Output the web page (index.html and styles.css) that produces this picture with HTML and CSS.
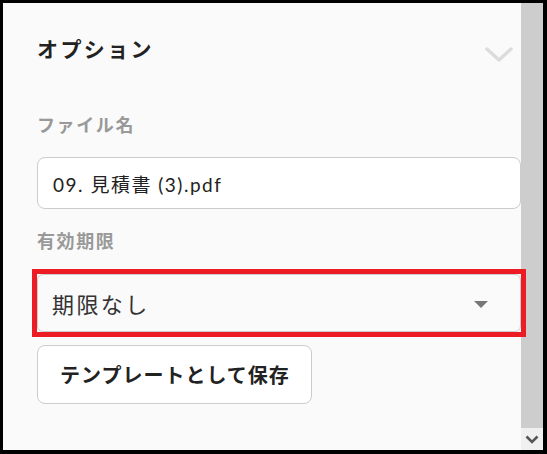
FILE: index.html
```html
<!DOCTYPE html>
<html>
<head>
    <title>オプション</title>
    <link rel="stylesheet" href="styles.css">
</head>
<body>
<div class="frame">
    <div class="panel">
        <div class="header">
            <h2>オプション</h2>
            <svg class="collapse" width="28" height="16" viewBox="0 0 28 16">
                <path d="M2 2 L14 13 L26 2" fill="none" stroke="#dcdcdc" stroke-width="3.5" stroke-linecap="round" stroke-linejoin="round"/>
            </svg>
        </div>

        <label class="field-label">ファイル名</label>
        <div class="text-input">09. 見積書 (3).pdf</div>

        <label class="field-label">有効期限</label>
        <div class="highlight">
            <div class="select">
                <span>期限なし</span>
                <span class="caret"></span>
            </div>
        </div>

        <button class="save-btn">テンプレートとして保存</button>
    </div>
    <div class="scrollbar">
        <div class="thumb"></div>
        <div class="arrow">
            <svg width="14" height="9" viewBox="0 0 14 9">
                <path d="M1.5 1.5 L7 7 L12.5 1.5" fill="none" stroke="#555" stroke-width="2.5"/>
            </svg>
        </div>
    </div>
</div>
</body>
</html>
```

FILE: styles.css
```css
* { box-sizing: border-box; }
html, body {
    margin: 0;
    padding: 0;
    background: #000;
}
body {
    font-family: Lato, "Noto Sans CJK JP", sans-serif;
    color: #222;
}
.frame {
    width: 547px;
    height: 454px;
    border: 3px solid #000;
    border-right-width: 4px;
    border-bottom-width: 4px;
    display: flex;
    background: #fafafa;
}
.panel {
    flex: 1;
    display: flex;
    flex-direction: column;
    align-items: flex-start;
    padding: 33px 0 0 34px;
}
.header {
    width: 100%;
    display: flex;
    justify-content: space-between;
    align-items: flex-start;
}
.header h2 {
    margin: 0;
    font-size: 21px;
    line-height: 26px;
    letter-spacing: 2.4px;
    font-weight: bold;
    color: #222;
}
.collapse {
    margin: 11px 8px 0 0;
}
.field-label {
    display: block;
    font-size: 18px;
    line-height: 22px;
    letter-spacing: 1.6px;
    font-weight: bold;
    color: #999;
    margin-top: 51px;
}
.text-input {
    width: 100%;
    height: 52px;
    margin-top: 21px;
    padding-left: 15px;
    display: flex;
    align-items: center;
    background: #fff;
    border: 1px solid #ccc;
    border-radius: 8px;
    font-size: 19px;
    letter-spacing: 1.5px;
    color: #222;
}
.text-input + .field-label {
    margin-top: 21px;
}
.highlight {
    width: calc(100% + 10px);
    margin: 17px -5px 0;
    border: 5px solid #ed1c24;
    position: relative;
    z-index: 1;
}
.select {
    height: 58px;
    padding: 0 32px 0 14px;
    display: flex;
    align-items: center;
    justify-content: space-between;
    background: #fafafa;
    border: 1px solid #ccc;
    border-radius: 6px;
    font-size: 22px;
    letter-spacing: 2.4px;
    color: #333;
}
.caret {
    width: 0;
    height: 0;
    border-left: 7px solid transparent;
    border-right: 7px solid transparent;
    border-top: 7px solid #777;
    margin-top: 2px;
}
.save-btn {
    margin-top: 8px;
    height: 59px;
    padding: 0 21px 0 22px;
    background: #fff;
    border: 1px solid #ccc;
    border-radius: 8px;
    font-family: Lato, "Noto Sans CJK JP", sans-serif;
    font-size: 20px;
    letter-spacing: 1px;
    font-weight: bold;
    color: #222;
}
.scrollbar {
    width: 22px;
    display: flex;
    flex-direction: column;
}
.thumb {
    flex: 1;
    background: #cdcdcd;
}
.arrow {
    height: 22px;
    background: #f0f0f0;
    display: flex;
    align-items: center;
    justify-content: center;
}
```
